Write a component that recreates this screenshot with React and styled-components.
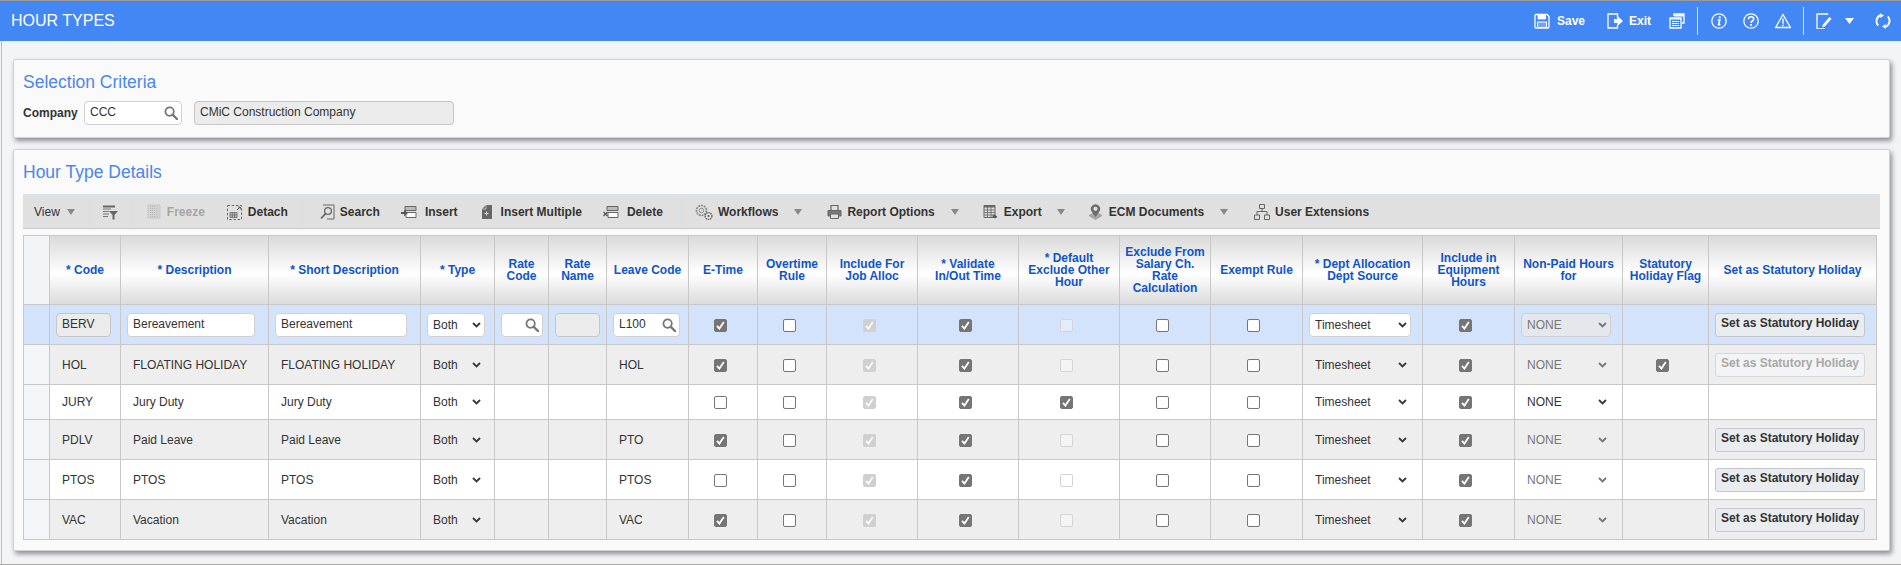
import React from "react";
import styled, { createGlobalStyle } from "styled-components";

const Global = createGlobalStyle`
  html, body { margin: 0; padding: 0; height: 565px; overflow: hidden; background: #f3f4f6; }
  body { font-family: "Liberation Sans", Arial, sans-serif; font-size: 12px; color: #333; }
  * { box-sizing: border-box; }
`;

const Frame = styled.div`
  height: 565px; border-top: 1px solid #9a9a9a; border-bottom: 1px solid #a8a8a8; display: flex; flex-direction: column;
`;
const Header = styled.header`
  height: 40px; flex: none; background: #4387f5; color: #fff; display: flex; align-items: center; justify-content: space-between; padding: 0 10px 0 11px;
`;
const PageTitle = styled.h1`margin: 0; font-size: 16px; font-weight: 400; line-height: 40px;`;
const HeaderActions = styled.div`display: flex; align-items: center; height: 100%;`;
const HeaderAction = styled.div`
  display: flex; align-items: center; gap: ${p => p.$gap ?? 6}px; margin-left: ${p => p.$ml || 0}px; font-weight: 700; font-size: 12px; color: #fff;
  svg { display: block; flex: none; }
`;
const HeaderDivider = styled.div`width: 1px; height: 28px; background: #cfe0fb; margin-left: ${p => p.$ml}px;`;

const Main = styled.main`
  flex: 1; padding: 18px 10px 0 11px; border-left: 1px solid #bdbdbd; margin: 0 1px;
  display: flex; flex-direction: column; gap: 11px;
`;
const Panel = styled.section`
  height: ${p => p.$h}px; background: #fafafa; border: 1px solid #d2d2d2; border-radius: 2px; box-shadow: 2px 3px 5px rgba(0,0,0,.42); padding: 0 9px;
`;
const PanelTitle = styled.h2`margin: 0; font-size: 17.5px; font-weight: 400; color: #4a86ec; line-height: 20px; padding-top: 12px; height: ${p => p.$h}px;`;
const FieldRow = styled.div`display: flex; align-items: center; height: 24px;`;
const FieldLabel = styled.label`font-weight: 700; font-size: 12px; color: #333; width: 61px; flex: none;`;

const TextBox = styled.div`
  position: relative; height: 24px; width: ${p => p.$w}px; flex: none; margin-left: ${p => p.$ml || 0}px;
  background: ${p => p.$readonly ? "#ebebeb" : "#fff"}; border: 1px solid ${p => p.$readonly ? "#c6c6c6" : "#d0d0d0"}; border-radius: 4px;
  padding-left: 5px; line-height: 21px; color: #333; font-size: 12px; white-space: nowrap;
  svg { position: absolute; right: 3px; top: 4px; }
`;

const Toolbar = styled.div`
  height: 35px; background: #e0e0e0; border-top: 1px solid #d5e3f5; border-bottom: 1px solid #c9c9c9; display: flex; align-items: center; padding-left: 11px; font-size: 12px; white-space: nowrap;
`;
const ToolSep = styled.div`width: 1px; height: 28px; background: #d7e0ea; flex: none; margin-left: ${p => p.$ml}px;`;
const ToolItem = styled.div`
  display: flex; align-items: center; gap: ${p => p.$gap ?? 6}px; margin-left: ${p => p.$ml || 0}px; font-weight: ${p => p.$plain ? 400 : 700};
  color: ${p => p.$disabled ? "#a5a5a5" : "#333"};
  svg { display: block; flex: none; }
`;
const Caret = styled.span`
  width: 0; height: 0; flex: none; margin-left: ${p => p.$ml}px; border-left: 4.5px solid transparent; border-right: 4.5px solid transparent; border-top: 6px solid #888;
`;

const Table = styled.table`
  table-layout: fixed; width: 1853px; margin-top: 6px; border-collapse: collapse; font-size: 12px; background: #fff; border: 1px solid #c8c8c8;
`;
const HeadCell = styled.th`
  height: 69px; padding: 0; font-weight: 700; line-height: 12px; color: #0f55c8; text-align: center; vertical-align: middle; border: 1px solid #c8c8c8; white-space: nowrap;
  background: ${p => p.$blank ? "#f2f4f8" : "linear-gradient(#dadada 0%, #f4f4f4 38%, #fff 55%, #e6e6e6 85%, #dcdcdc 100%)"};
`;
const HeadLine = styled.span`display: block;`;
const Row = styled.tr`
  height: ${p => p.$h}px;
  background: ${p => p.$tone === "sel" ? "#d2e3fb" : p.$tone === "alt" ? "#eeeeee" : "#fff"};
`;
const Cell = styled.td`
  padding: ${p => p.$center ? "0 6px 0 0" : "0 0 0 6px"}; border: 1px solid #c8c8c8; text-align: ${p => p.$center ? "center" : "left"}; color: #333; vertical-align: middle; white-space: nowrap;
`;
const SelectorCell = styled.td`border: 1px solid #c8c8c8; background: ${p => p.$sel ? "#d2e3fb" : "#f3f5f8"};`;
const CellText = styled.span`padding-left: 6px;`;

const CheckMark = styled.span`
  display: inline-flex; align-items: center; justify-content: center; width: 13px; height: 13px; border-radius: 2px; vertical-align: middle;
  background: ${p => p.$on ? (p.$off ? "#d0d0d0" : "#757575") : (p.$off ? "rgba(255,255,255,.35)" : "#fff")};
  border: 1px solid ${p => p.$on ? (p.$off ? "#d0d0d0" : "#757575") : (p.$off ? "#d4d4d4" : "#767676")};
`;
const SelectWrap = styled.div`
  position: relative; width: ${p => p.$w}px; height: 24px;
  svg { position: absolute; right: ${p => p.$chev}px; top: 9px; pointer-events: none; }
`;
const NativeSelect = styled.select`
  appearance: none; width: 100%; height: 100%; padding: 0 0 0 5px; font: 12px "Liberation Sans", Arial, sans-serif; outline: none; opacity: 1;
  color: ${p => p.$dim ? "#777" : "#333"};
  background: ${p => p.$box ? (p.$dim ? "#e4e7ec" : "#fff") : "transparent"};
  border: 1px solid ${p => p.$box ? "#d0d0d0" : "transparent"}; border-radius: 4px;
`;
const ActionButton = styled.button`
  width: 150px; height: 24px; margin-left: 0; padding: 0 0 3px; font: 700 12px "Liberation Sans", Arial, sans-serif; border-radius: 3px;
  color: ${p => p.disabled ? "#a8a8a8" : "#333"};
  background: ${p => p.disabled ? "#f3f4f6" : "#eaedf0"};
  border: 1px solid ${p => p.disabled ? "#d6d8db" : "#c3c7cb"};
`;

const S = { fill: "none", stroke: "#fff", strokeWidth: 1.3 };
const Svg = ({ w = 16, h = 16, children, ...r }) => <svg width={w} height={h} viewBox={`0 0 ${w} ${h}`} {...r}>{children}</svg>;

const SaveIcon = () => <Svg><path d="M1 2.5A1 1 0 0 1 2 1.5h11l2 2V14a1 1 0 0 1-1 1H2a1 1 0 0 1-1-1z" {...S} /><path d="M4 2v4h7.5V2M9 2.5v2.5h1.5V2.5z" fill="#fff" stroke="#fff" strokeWidth=".8" /><path d="M3.5 9h9v5.5h-9z" fill="#fff" fillOpacity=".25" stroke="#fff" strokeWidth="1.1" /></Svg>;
const ExitIcon = () => <Svg><path d="M10.5 5V1H1v14h9.5v-3" {...S} /><path d="M7 6h3.5V3L16 8l-5.5 5v-3H7z" fill="#fff" /></Svg>;
const DocsIcon = () => <Svg><path d="M5 3V1h10v9h-2" {...S} /><path d="M5 2.5h10" stroke="#fff" strokeWidth="2" /><path d="M1 5h11v10H1z" {...S} /><path d="M1 6h11M3 8.5h7M3 10.5h7M3 12.5h7" stroke="#fff" strokeWidth="1.1" /></Svg>;
const InfoIcon = () => <Svg><circle cx="8" cy="8" r="7.2" {...S} /><circle cx="8.8" cy="4.4" r="1.1" fill="#fff" /><path d="M6.6 7h2.2l-1.2 4.6h1.8" fill="none" stroke="#fff" strokeWidth="1.6" /></Svg>;
const HelpIcon = () => <Svg><circle cx="8" cy="8" r="7.2" {...S} /><path d="M5.4 6.2C5.4 4.6 6.6 3.8 8 3.8s2.7.8 2.7 2.2c0 2-2.7 2-2.7 3.9" fill="none" stroke="#fff" strokeWidth="1.6" /><circle cx="8" cy="12" r="1.1" fill="#fff" /></Svg>;
const WarnIcon = () => <Svg><path d="M8 1.5 15.4 14.5H.6z" {...S} /><path d="M8 5.5v5.2" stroke="#fff" strokeWidth="1.4" /><circle cx="8" cy="12.3" r=".9" fill="#fff" /></Svg>;
const EditIcon = () => <Svg><path d="M11.5 2V1H1v15h8" {...S} /><path d="M6 14.5 7 11.5 13.5 4l2 1.8-6.4 7.4z" fill="#fff" /></Svg>;
const RefreshIcon = () => <Svg><path d="M3.2 12.5A6.4 6.4 0 0 1 6 2M12.8 3.5A6.4 6.4 0 0 1 10 14" fill="none" stroke="#fff" strokeWidth="1.9" /><path d="M5 .2 9 2.4 5.4 5zM11 15.8 7 13.6l3.6-2.6z" fill="#fff" /></Svg>;
const WhiteCaret = () => <Svg w={9} h={6}><path d="M0 0h9L4.5 6z" fill="#fff" /></Svg>;

const SearchGlyph = ({ size = 14 }) => <svg width={size} height={size} viewBox="0 0 14 14"><circle cx="5.6" cy="5.6" r="4.2" fill="none" stroke="#777" strokeWidth="1.8" /><path d="M8.8 8.8 13 13" stroke="#777" strokeWidth="2.4" strokeLinecap="round" /></svg>;
const Chevron = ({ color = "#3a3a3a" }) => <svg width="9" height="6" viewBox="0 0 9 6"><path d="M1 1l3.5 3.5L8 1" fill="none" stroke={color} strokeWidth="1.9" /></svg>;

const G = { fill: "none", stroke: "#666", strokeWidth: 1 };
const GreyFilter = () => <Svg><path d="M1 1.5h12v2H1z" fill="#666" /><path d="M1 5h8M1 7.5h6M1 10h6M1 12.5h5" stroke="#777" /><path d="M7 7h9l-3.5 4v4.5h-2V11z" fill="#666" /></Svg>;
const FreezeIcon = () => <Svg w={14} h={16}><path d="M1 1h12v13H1z" fill="#d4d4d4" stroke="#c6c6c6" /><path d="M3.5 2v11M5.5 2v11M7.5 2v11M10 2v11" stroke="#b4b4b4" strokeDasharray="1 1" /></Svg>;
const DetachIcon = () => <Svg w={15}><path d="M.5 1.5h14v14H.5z" fill="none" stroke="#666" strokeDasharray="2.4 1.8" /><path d="M3 8.5h7v5H3zM3 10.2h7M3 11.9h7M5.3 8.5v5M7.6 8.5v5" {...G} strokeWidth=".8" /><path d="M10 6l3-3M11 3h2.3v2.3" {...G} /></Svg>;
const SearchDoc = () => <Svg w={15}><path d="M3 1h11v14H7" {...G} /><circle cx="8" cy="7" r="3.4" {...G} strokeWidth="1.3" /><path d="M5.6 9.6 1 14.5" stroke="#666" strokeWidth="1.8" /></Svg>;
const InsertIcon = () => <Svg><path d="M4 2.5h11v4H4z" fill="#bbb" stroke="#666" /><path d="M5 8.5h10v5H5z" fill="#fff" stroke="#666" /><path d="M0 8h3V5.8L7 9l-4 3.2V10H0z" fill="#555" /></Svg>;
const MultiIcon = () => <Svg w={12}><path d="M1 5 5 1h6v14H1z" fill="#666" /><path d="M3.5 9.5h4M5.5 7.5v4" stroke="#ddd" /><path d="M5 1v4H1" fill="none" stroke="#ddd" strokeWidth=".7" /></Svg>;
const DeleteIcon = () => <Svg><path d="M4 2.5h11v4H4z" fill="#bbb" stroke="#666" /><path d="M5 8.5h10v5H5z" fill="#fff" stroke="#666" /><path d="M.5 8l4 4M4.5 8l-4 4" stroke="#555" strokeWidth="1.2" /></Svg>;
const GearIcon = () => <Svg w={18}><circle cx="6.5" cy="6.5" r="5" fill="none" stroke="#888" strokeWidth="1.7" strokeDasharray="2 .8" /><circle cx="6.5" cy="6.5" r="2.2" {...G} stroke="#888" /><circle cx="13.5" cy="12" r="3.4" fill="none" stroke="#666" strokeWidth="1.4" strokeDasharray="1.5 .7" /><circle cx="13.5" cy="12" r="1.1" fill="#666" /></Svg>;
const PrintIcon = () => <Svg w={15}><path d="M4 6V1.5h7V6" {...G} strokeWidth="1.2" /><path d="M1 6.5h13v5.5H1z" fill="#777" stroke="#666" /><path d="M3.5 10h8v4.5h-8z" fill="#e0e0e0" stroke="#666" /></Svg>;
const ExportIcon = () => <Svg w={15}><path d="M1 1.5h11v12H1z" fill="#ddd" stroke="#666" /><path d="M1 2.5h11" stroke="#666" strokeWidth="2" /><path d="M1 6h11M1 8.5h11M1 11h11M4.5 3v10M8 3v10" stroke="#666" strokeWidth=".8" /><path d="M9 12l3 2.5 2.5-1.5-3-2.5z" fill="#555" /></Svg>;
const EcmIcon = () => <Svg w={15}><path d="M1 11.5 7.5 8l6.5 3.5L7.5 15.5z" fill="#a8a8a8" stroke="#888" strokeWidth=".6" /><path d="M7.5 13 3.6 7.4a4.6 4.6 0 1 1 7.8 0z" fill="#6c6c6c" /><circle cx="7.5" cy="4.8" r="2.1" fill="#e0e0e0" /></Svg>;
const OrgIcon = () => <Svg><path d="M5.5.5h5v4h-5zM.5 11h5v4.5h-5zM10.5 11h5v4.5h-5z" {...G} /><path d="M8 4.5v3M3 11V7.5h10V11" {...G} /></Svg>;

const Tick = ({ light }) => <svg width="9" height="9" viewBox="0 0 9 9"><path d="M1 4.8 3.4 7.6 7.8 1" fill="none" stroke="#fff" strokeWidth="1.8" opacity={light ? .9 : 1} /></svg>;
const Check = ({ on, off }) => <CheckMark $on={on} $off={off}>{on && <Tick light={off} />}</CheckMark>;

const Select = ({ value, w, box, dim, chev = 4 }) => (
  <SelectWrap $w={w} $chev={chev}>
    <NativeSelect $box={box} $dim={dim} defaultValue={value} disabled={dim}><option>{value}</option></NativeSelect>
    <Chevron color={dim ? "#777" : "#3a3a3a"} />
  </SelectWrap>
);

const columns = [
  [26, []], [71, ["* Code"]], [148, ["* Description"]], [152, ["* Short Description"]], [74, ["* Type"]], [54, ["Rate", "Code"]], [58, ["Rate", "Name"]],
  [82, ["Leave Code"]], [69, ["E-Time"]], [69, ["Overtime", "Rule"]], [91, ["Include For", "Job Alloc"]], [101, ["* Validate", "In/Out Time"]],
  [101, ["* Default", "Exclude Other", "Hour"]], [91, ["Exclude From", "Salary Ch.", "Rate", "Calculation"]], [92, ["Exempt Rule"]],
  [120, ["* Dept Allocation", "Dept Source"]], [92, ["Include in", "Equipment", "Hours"]], [108, ["Non-Paid Hours", "for"]], [86, ["Statutory", "Holiday Flag"]], [168, ["Set as Statutory Holiday"]],
];

const rows = [
  { code: "HOL", desc: "FLOATING HOLIDAY", leave: "HOL", h: 40, tone: "alt", eTime: true, excl: false, stat: true, btn: "disabled", none: true },
  { code: "JURY", desc: "Jury Duty", leave: "", h: 35, tone: "", eTime: false, excl: true, stat: false, btn: null, none: false },
  { code: "PDLV", desc: "Paid Leave", leave: "PTO", h: 40, tone: "alt", eTime: true, excl: false, stat: false, btn: "on", none: true },
  { code: "PTOS", desc: "PTOS", leave: "PTOS", h: 40, tone: "", eTime: false, excl: false, stat: false, btn: "on", none: true },
  { code: "VAC", desc: "Vacation", leave: "VAC", h: 40, tone: "alt", eTime: true, excl: false, stat: false, btn: "on", none: true },
];

const Tool = ({ icon, label, ml, disabled, gap }) => <ToolItem $ml={ml} $disabled={disabled} $gap={gap}>{icon}<span>{label}</span></ToolItem>;

export default function App() {
  return (
    <>
      <Global />
      <Frame>
        <Header>
          <PageTitle>HOUR TYPES</PageTitle>
          <HeaderActions>
            <HeaderAction $gap={7}><SaveIcon /><span>Save</span></HeaderAction>
            <HeaderAction $ml={22}><ExitIcon /><span>Exit</span></HeaderAction>
            <HeaderAction $ml={18}><DocsIcon /></HeaderAction>
            <HeaderDivider $ml={12} />
            <HeaderAction $ml={13}><InfoIcon /></HeaderAction>
            <HeaderAction $ml={16}><HelpIcon /></HeaderAction>
            <HeaderAction $ml={16}><WarnIcon /></HeaderAction>
            <HeaderDivider $ml={12} />
            <HeaderAction $ml={12}><EditIcon /></HeaderAction>
            <HeaderAction $ml={13}><WhiteCaret /></HeaderAction>
            <HeaderAction $ml={21}><RefreshIcon /></HeaderAction>
          </HeaderActions>
        </Header>
        <Main>
          <Panel $h={79}>
            <PanelTitle $h={41}>Selection Criteria</PanelTitle>
            <FieldRow>
              <FieldLabel>Company</FieldLabel>
              <TextBox $w={98}>CCC<SearchGlyph /></TextBox>
              <TextBox $w={260} $ml={12} $readonly>CMiC Construction Company</TextBox>
            </FieldRow>
          </Panel>
          <Panel $h={402}>
            <PanelTitle $h={44}>Hour Type Details</PanelTitle>
            <Toolbar>
              <ToolItem $plain>View</ToolItem><Caret $ml={7} />
              <ToolSep $ml={14} />
              <ToolItem $ml={12}><GreyFilter /></ToolItem>
              <ToolSep $ml={13} />
              <Tool ml={15} icon={<FreezeIcon />} label="Freeze" disabled />
              <Tool ml={22} icon={<DetachIcon />} label="Detach" />
              <ToolSep $ml={15} />
              <Tool ml={16} gap={5} icon={<SearchDoc />} label="Search" />
              <Tool ml={21} gap={8} icon={<InsertIcon />} label="Insert" />
              <Tool ml={23} gap={8} icon={<MultiIcon />} label="Insert Multiple" />
              <Tool ml={21} gap={8} icon={<DeleteIcon />} label="Delete" />
              <ToolSep $ml={17} />
              <Tool ml={14} gap={5} icon={<GearIcon />} label="Workflows" /><Caret $ml={16} />
              <Tool ml={25} gap={5} icon={<PrintIcon />} label="Report Options" /><Caret $ml={16} />
              <Tool ml={24} gap={6} icon={<ExportIcon />} label="Export" /><Caret $ml={15} />
              <Tool ml={23} gap={6} icon={<EcmIcon />} label="ECM Documents" /><Caret $ml={16} />
              <Tool ml={26} gap={5} icon={<OrgIcon />} label="User Extensions" />
            </Toolbar>
            <Table>
              <colgroup>{columns.map(([w], i) => <col key={i} width={w} />)}</colgroup>
              <thead>
                <tr>{columns.map(([, lines], i) => <HeadCell key={i} $blank={i === 0}>{lines.map(l => <HeadLine key={l}>{l}</HeadLine>)}</HeadCell>)}</tr>
              </thead>
              <tbody>
                <Row $h={40} $tone="sel">
                  <SelectorCell $sel />
                  <Cell><TextBox $w={55} $readonly>BERV</TextBox></Cell>
                  <Cell><TextBox $w={128}>Bereavement</TextBox></Cell>
                  <Cell><TextBox $w={132}>Bereavement</TextBox></Cell>
                  <Cell><Select value="Both" w={58} box /></Cell>
                  <Cell><TextBox $w={42}><SearchGlyph /></TextBox></Cell>
                  <Cell><TextBox $w={45} $readonly /></Cell>
                  <Cell><TextBox $w={67}>L100<SearchGlyph /></TextBox></Cell>
                  <Cell $center><Check on /></Cell>
                  <Cell $center><Check /></Cell>
                  <Cell $center><Check on off /></Cell>
                  <Cell $center><Check on /></Cell>
                  <Cell $center><Check off /></Cell>
                  <Cell $center><Check /></Cell>
                  <Cell $center><Check /></Cell>
                  <Cell><Select value="Timesheet" w={102} box /></Cell>
                  <Cell $center><Check on /></Cell>
                  <Cell><Select value="NONE" w={90} box dim /></Cell>
                  <Cell />
                  <Cell><ActionButton>Set as Statutory Holiday</ActionButton></Cell>
                </Row>
                {rows.map(r => (
                  <Row key={r.code} $h={r.h} $tone={r.tone}>
                    <SelectorCell />
                    <Cell><CellText>{r.code}</CellText></Cell>
                    <Cell><CellText>{r.desc}</CellText></Cell>
                    <Cell><CellText>{r.desc}</CellText></Cell>
                    <Cell><Select value="Both" w={58} /></Cell>
                    <Cell />
                    <Cell />
                    <Cell><CellText>{r.leave}</CellText></Cell>
                    <Cell $center><Check on={r.eTime} /></Cell>
                    <Cell $center><Check /></Cell>
                    <Cell $center><Check on off /></Cell>
                    <Cell $center><Check on /></Cell>
                    <Cell $center>{r.excl ? <Check on /> : <Check off />}</Cell>
                    <Cell $center><Check /></Cell>
                    <Cell $center><Check /></Cell>
                    <Cell><Select value="Timesheet" w={102} /></Cell>
                    <Cell $center><Check on /></Cell>
                    <Cell><Select value="NONE" w={90} dim={r.none} /></Cell>
                    <Cell $center>{r.stat && <Check on />}</Cell>
                    <Cell>{r.btn && <ActionButton disabled={r.btn === "disabled"}>Set as Statutory Holiday</ActionButton>}</Cell>
                  </Row>
                ))}
              </tbody>
            </Table>
          </Panel>
        </Main>
      </Frame>
    </>
  );
}
